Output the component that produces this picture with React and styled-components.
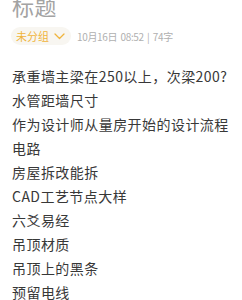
import React from 'react'
import styled, { createGlobalStyle } from 'styled-components'

const GlobalStyle = createGlobalStyle`
	html, body {
		margin: 0;
		padding: 0;
		background: #ffffff;
	}
	body {
		font-family: 'Noto Sans CJK SC', 'Noto Sans', sans-serif;
		overflow: hidden;
	}
`

const lines = [
	'承重墙主梁在250以上，次梁200?',
	'水管距墙尺寸',
	'作为设计师从量房开始的设计流程',
	'电路',
	'房屋拆改能拆',
	'CAD工艺节点大样',
	'六爻易经',
	'吊顶材质',
	'吊顶上的黑条',
	'预留电线',
]

const Chevron = () => (
	<svg width="11" height="7" viewBox="0 0 11 7" fill="none">
		<path d="M1 1l4.5 4.5L10 1" stroke="#f0b43c" strokeWidth="1.3" strokeLinecap="round" strokeLinejoin="round" />
	</svg>
)

const App = () => {
	return (
		<>
			<GlobalStyle />
			<SPage>
				<Title>标题</Title>

				<Meta>
					<Group>
						<span>未分组</span>
						<Chevron />
					</Group>
					<Info>10月16日 08:52 | 74字</Info>
				</Meta>

				<List>
					{lines.map((text) => (
						<Line key={text}>{text}</Line>
					))}
				</List>
			</SPage>
		</>
	)
}

export default App

const SPage = styled.div`
	width: 242px;
	height: 300px;
	padding: 0 12px;
	box-sizing: border-box;
	overflow: hidden;
`

const Title = styled.h1`
	margin: -8px 0 0;
	font-size: 22px;
	line-height: 26px;
	font-weight: 400;
	letter-spacing: 0.5px;
	color: #a3a3a3;
`

const Meta = styled.div`
	display: flex;
	align-items: center;
	gap: 6px;
	margin-top: 9px;
	margin-left: -1px;
`

const Group = styled.div`
	display: flex;
	align-items: center;
	gap: 5px;
	height: 18px;
	padding: 0 6px 0 5px;
	border-radius: 9px;
	background: #f8f6f1;
	font-size: 11px;
	color: #f0b43c;
`

const Info = styled.span`
	font-size: 10px;
	color: #b0b0b0;
	letter-spacing: -0.35px;
	word-spacing: 1.5px;
`

const List = styled.div`
	display: flex;
	flex-direction: column;
	margin-top: 19px;
`

const Line = styled.div`
	font-size: 14px;
	line-height: 24px;
	letter-spacing: 0.45px;
	color: #383838;
	white-space: nowrap;
`
